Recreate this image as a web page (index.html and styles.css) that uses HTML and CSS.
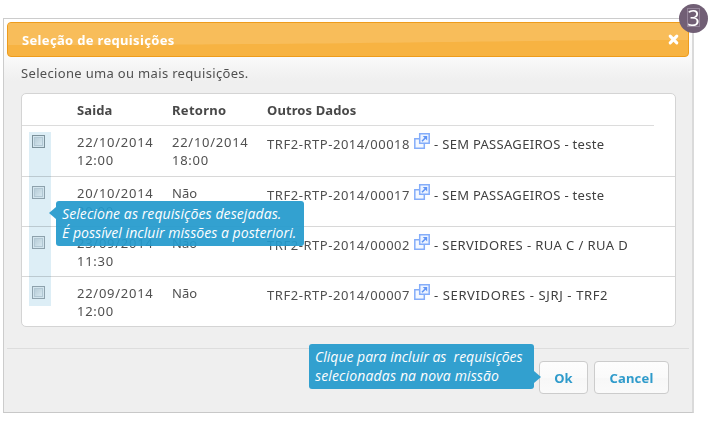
FILE: index.html
```html
<!DOCTYPE html>
<html lang="pt-BR">
<head>
<meta charset="utf-8">
<title>Seleção de requisições</title>
<link rel="stylesheet" href="styles.css">
</head>
<body>
<svg width="0" height="0" class="defs"><symbol id="ext" viewBox="0 0 16 16"><path d="M5 5.700H.8v9.500h9.500V11" fill="#f4f8ff" stroke="#84adfa" stroke-width="1.500"/><path d="M5.700.8h9.500v9.500H5.700z" fill="#eef4ff" stroke="#84adfa" stroke-width="1.500"/><path d="M8 8.300L12 4.200" stroke="#5f94f6" stroke-width="1.500"/><path d="M8.800 3h4.400v4.400z" fill="#5f94f6"/></symbol></svg>
<main class="dialog">
  <header class="titlebar"><svg class="sheen" viewBox="0 0 680 33" preserveAspectRatio="none"><path d="M0 0H680V17C500 17 340 22 0 22z"/></svg><h1>Seleção de requisições</h1><svg class="close" viewBox="0 0 10 10"><path d="M2 2l6 6M8 2L2 8"/></svg></header>
  <p class="intro">Selecione uma ou mais requisições.</p>
  <section class="list">
    <div class="row head"><span></span><b>Saida</b><b class="h2">Retorno</b><b>Outros Dados</b></div>
    <div class="row first"><i class="check"></i><span class="date">22/10/2014<br>12:00</span><span class="date">22/10/2014<br>18:00</span><div class="data"><span class="code">TRF2-RTP-2014/00018</span><svg class="ext"><use href="#ext"/></svg><span class="desc d1">- SEM PASSAGEIROS - teste</span></div></div>
    <div class="row"><i class="check"></i><span class="date">20/10/2014<br>20:00</span><span class="nao">Não</span><div class="data"><span class="code">TRF2-RTP-2014/00017</span><svg class="ext"><use href="#ext"/></svg><span class="desc d1">- SEM PASSAGEIROS - teste</span></div></div>
    <div class="row"><i class="check"></i><span class="date">23/09/2014<br>11:30</span><span class="nao">Não</span><div class="data"><span class="code">TRF2-RTP-2014/00002</span><svg class="ext"><use href="#ext"/></svg><span class="desc d3">- SERVIDORES - RUA C / RUA D</span></div></div>
    <div class="row"><i class="check"></i><span class="date">22/09/2014<br>12:00</span><span class="nao">Não</span><div class="data"><span class="code">TRF2-RTP-2014/00007</span><svg class="ext"><use href="#ext"/></svg><span class="desc d4">- SERVIDORES - SJRJ - TRF2</span></div></div>
    <div class="highlight"></div>
  </section>
  <footer class="actions"><button class="ok">Ok</button><button class="cancel">Cancel</button></footer>
</main>
<aside class="tip tip-select"><span class="t1">Selecione as requisições desejadas.</span><br><span class="t2">É possível incluir missões a posteriori.</span></aside>
<aside class="tip tip-ok"><span class="t3">Clique para incluir as&nbsp; requisições</span><br><span class="t4">selecionadas na nova missão</span></aside>
<div class="badge"><span>3</span></div>
</body>
</html>
```
FILE: styles.css
```css
* { box-sizing: border-box; }
body { margin: 0; height: 421px; padding: 18px 0 0 3px; position: relative; background: #fff; overflow: hidden; font: 13px/18px "Noto Sans", sans-serif; color: #505050; }
.defs { position: absolute; }
.dialog { width: 691px; height: 395px; padding: 3px; border: 1px solid #ccc; border-right: 2px solid #dadada; border-bottom-color: #c8c8c8; background: linear-gradient(#fff 0, #fafafa 38px, #efefef 62px, #efefef); }
.titlebar { position: relative; width: 682px; height: 35px; display: flex; align-items: center; justify-content: space-between; padding: 0 9px 0 14px; border: 1px solid #ee9c1c; border-radius: 4px; background: #f7b342; overflow: hidden; }
.sheen { position: absolute; left: 0; top: 0; width: 100%; height: 100%; fill: #f8bd5a; }
.titlebar h1 { position: relative; margin: 0; font: bold 13px/18px "Noto Sans", sans-serif; letter-spacing: .33px; color: #fff; white-space: nowrap; }
.close { position: relative; width: 11px; height: 11px; stroke: #fff; stroke-width: 2.800; stroke-linecap: round; }
.intro { margin: 7px 0 11px 14px; letter-spacing: .33px; white-space: nowrap; }
.list { position: relative; width: 655px; height: 234px; margin-left: 14px; border: 1px solid #d4d4d4; border-radius: 5px; background: #fff; }
.row { display: grid; grid-template-columns: 55px 95px 95px 1fr; height: 50px; padding-top: 7px; border-bottom: 1px solid #d8d8d8; white-space: nowrap; }
.row.first { height: 51px; }
.row:nth-child(5) { border: 0; }
.row.head { width: 632px; height: 32px; color: #484848; border-color: #dcdcdc; letter-spacing: .1px; }
.row .h2 { letter-spacing: .3px; }
.check { width: 13px; height: 13px; margin: 2px 0 0 10px; border: 1px solid #a3adb2; background: linear-gradient(135deg, #ccd5da, #fff); box-shadow: inset 0 0 0 1px #f4f6f7, inset 0 0 0 2px #ced7dc; }
.first .check { border-color: #8f9ba1; }
.date { letter-spacing: .73px; }
.nao { letter-spacing: .1px; }
.data { display: flex; padding-top: 2px; }
.code { width: 147px; letter-spacing: .54px; }
.ext { width: 16px; height: 16px; margin: -2px 1px 0 0; }
.desc { margin-left: 3px; color: #404040; }
.d1 { letter-spacing: .31px; }
.d3 { letter-spacing: .4px; }
.d4 { letter-spacing: .62px; }
.highlight { position: absolute; left: 7px; top: 38px; width: 22px; height: 174px; background: #ddeef6; mix-blend-mode: multiply; }
.actions { height: 65px; margin-top: 21px; padding: 12px 20px 0 0; display: flex; justify-content: flex-end; align-items: flex-start; gap: 6px; border-top: 1px solid #ddd; }
button { height: 33px; padding: 0; border: 1px solid #ccc; border-radius: 4px; background: linear-gradient(#fdfdfd, #fafafa 50%, #f7f7f7 52%, #fafafa); color: #2f9bcb; font: bold 13px/18px "Noto Sans", sans-serif; }
.ok { width: 49px; }
.cancel { width: 75px; letter-spacing: .2px; }
.tip { position: absolute; height: 45px; padding: 3px 6px; border-radius: 3px; background: #249acd; opacity: .93; color: #fff; font: italic 14px/19px "Open Sans", sans-serif; white-space: nowrap; }
.tip-select { left: 56px; top: 201px; width: 248px; }
.tip-ok { left: 309px; top: 344px; width: 225px; }
.tip::after { content: ""; position: absolute; width: 0; height: 0; border: 6px solid transparent; }
.tip-select::after { left: -7px; top: 6px; border-left: 0; border-right: 7px solid #249acd; }
.tip-ok::after { right: -7px; top: 27px; border-right: 0; border-left: 7px solid #249acd; }
.t1 { letter-spacing: .09px; }
.t2 { letter-spacing: .05px; }
.t4 { letter-spacing: .15px; }
.badge { position: absolute; left: 679px; top: 4px; width: 29px; height: 29px; border-radius: 50%; background: #715f75; color: #fff; display: flex; align-items: center; justify-content: center; font: 22px/17px "Open Sans", sans-serif; }
.badge span { width: 13px; height: 19px; margin-bottom: 2px; border: 1px solid #95859a; display: flex; justify-content: center; }
```
